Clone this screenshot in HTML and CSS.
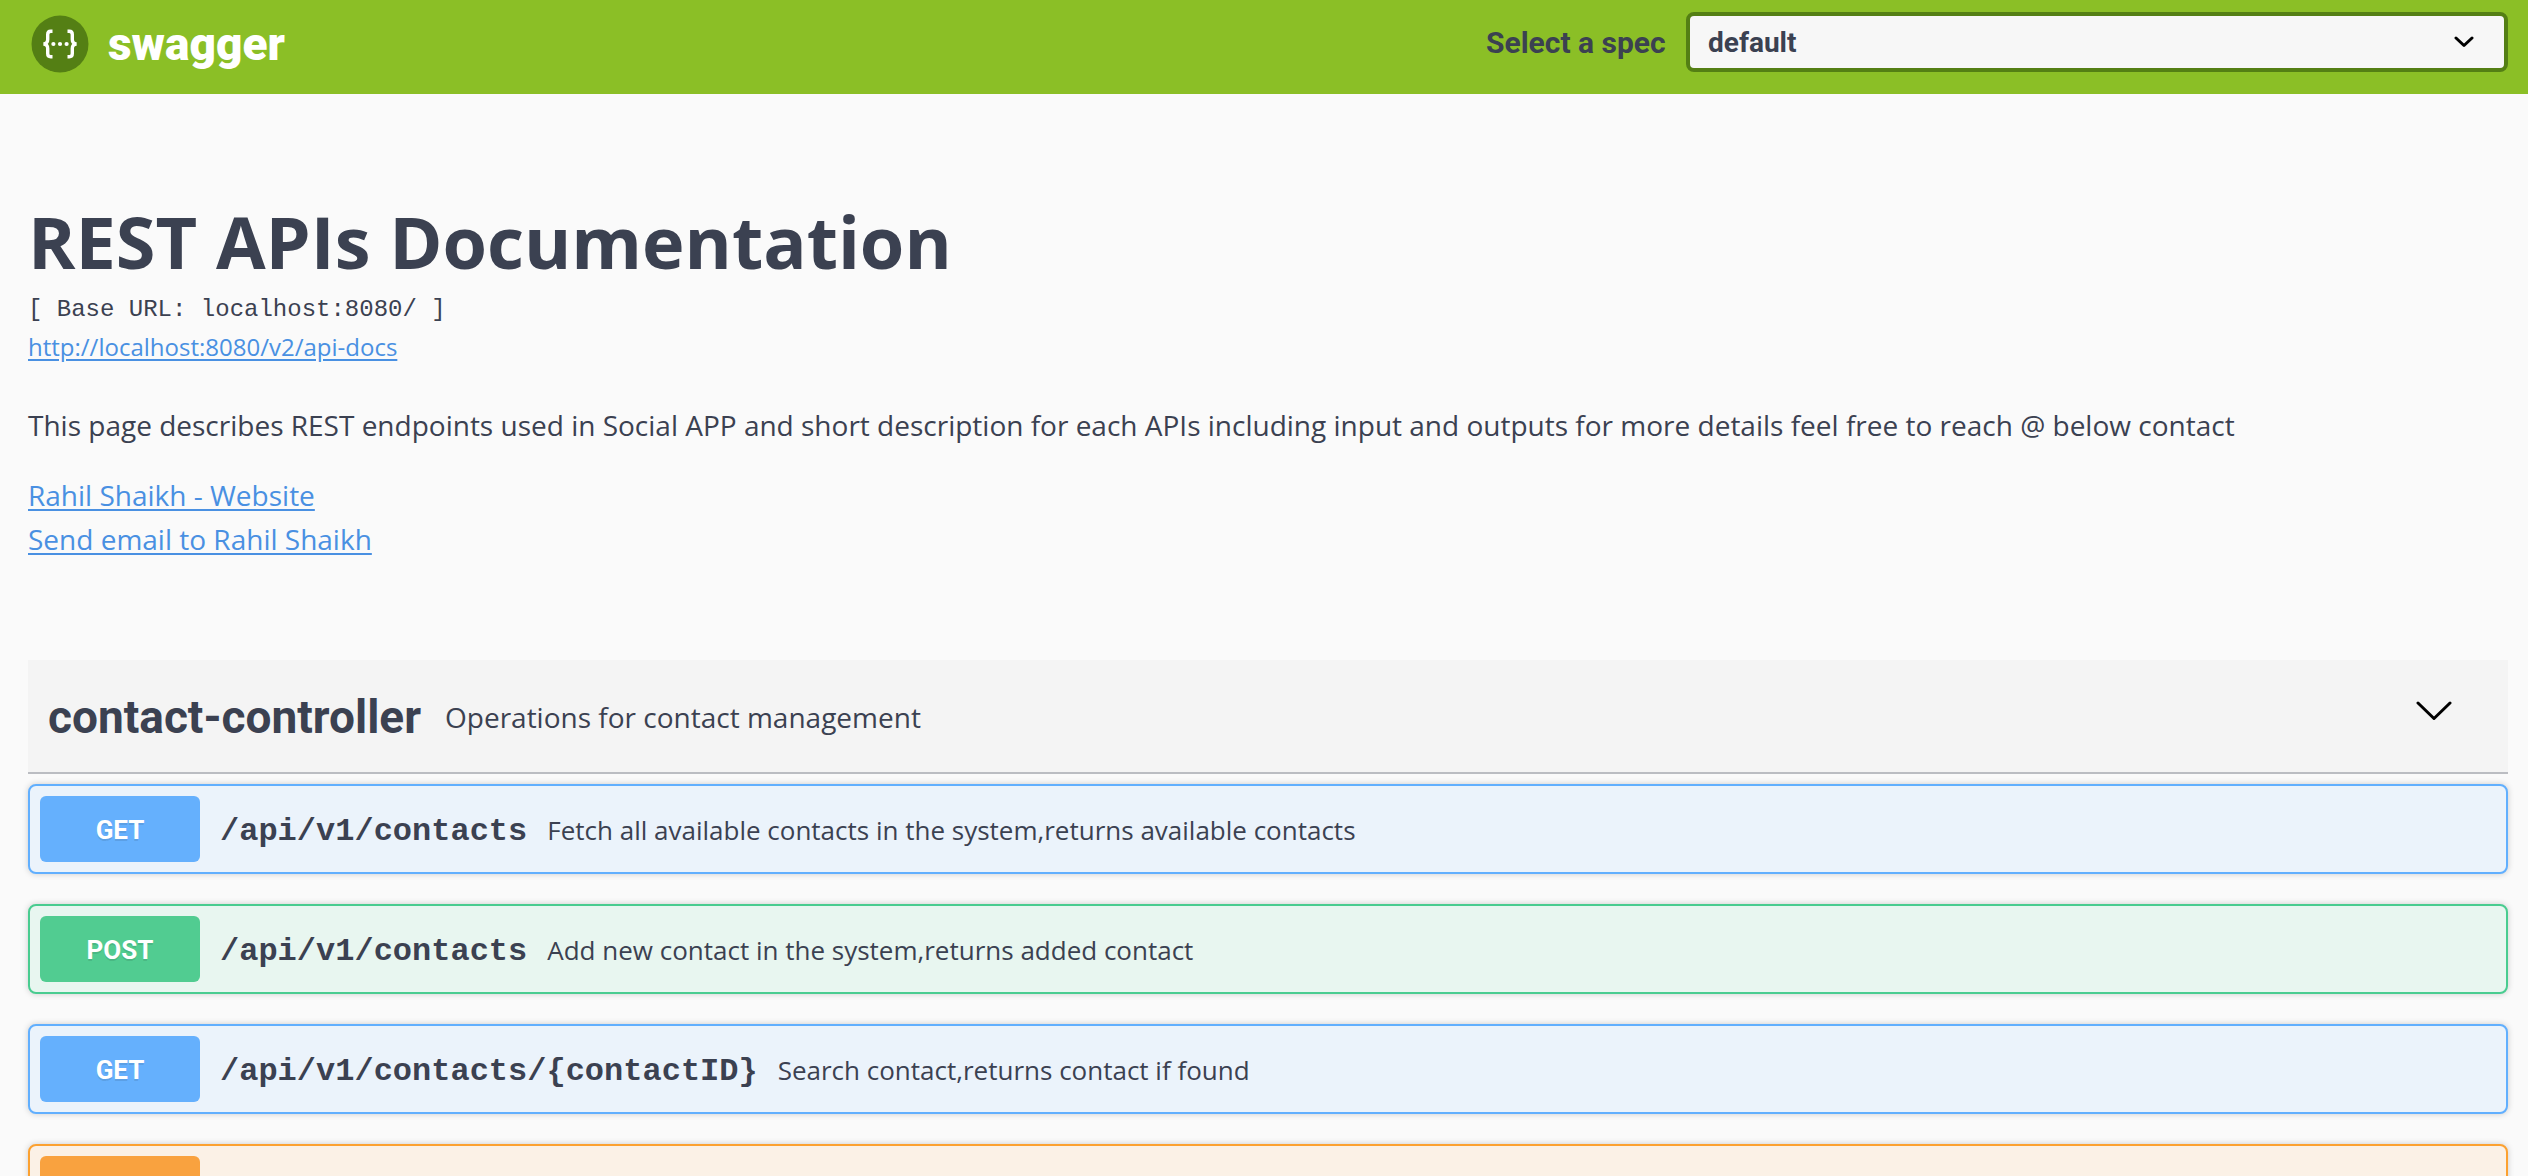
FILE: index.html
```html
<!DOCTYPE html>
<html lang="en">
<head>
<meta charset="utf-8">
<meta name="viewport" content="width=device-width, initial-scale=1">
<title>Swagger UI</title>
<link rel="stylesheet" href="styles.css">
</head>
<body>
<header class="topbar">
  <a class="brand" href="#">
    <svg class="brand-mark" viewBox="0 0 60 60" aria-hidden="true">
      <circle cx="30" cy="30" r="28.5" fill="#547f14"/>
      <g fill="none" stroke="#fff" stroke-width="3.4">
        <path d="M22.5 17.2h-1.8q-3 0-3 3.2v5.2q0 4-4.2 4.4q4.2.4 4.2 4.4v5.2q0 3.2 3 3.2h1.8"/>
        <path d="M37.5 17.2h1.8q3 0 3 3.2v5.2q0 4 4.2 4.4q-4.2.4-4.2 4.4v5.2q0 3.2-3 3.2h-1.8"/>
      </g>
      <g fill="#fff"><circle cx="23.4" cy="30" r="2.1"/><circle cx="30" cy="30" r="2.1"/><circle cx="36.6" cy="30" r="2.1"/></g>
    </svg>
    <span class="brand-name">swagger</span>
  </a>
  <form class="spec-form">
    <label class="spec-label" for="spec">Select a spec</label>
    <span class="spec-field">
      <select class="spec-select" id="spec"><option>default</option></select>
      <svg class="spec-arrow" viewBox="0 0 20 12" aria-hidden="true"><path d="M2 2l8 7.5 8-7.5"/></svg>
    </span>
  </form>
</header>
<main class="page">
  <section class="info">
    <h1 class="info-title">REST APIs Documentation</h1>
    <p class="base-url">[ Base URL: localhost:8080/ ]</p>
    <a class="docs-link" href="#">http://localhost:8080/v2/api-docs</a>
    <p class="description">This page describes REST endpoints used in Social APP and short description for each APIs including input and outputs for more details feel free to reach @ below contact</p>
    <div class="contact">
      <a href="#">Rahil Shaikh - Website</a>
      <a href="#">Send email to Rahil Shaikh</a>
    </div>
  </section>
  <section class="tag-section">
    <button class="tag-header" type="button">
      <span class="tag-name">contact-controller</span>
      <span class="tag-text">Operations for contact management</span>
      <svg class="tag-arrow" viewBox="0 0 36 20" aria-hidden="true"><path d="M2 2l16 15.5 16-15.5"/></svg>
    </button>
    <div class="operations">
      <button class="operation get" type="button">
        <span class="method">GET</span><span class="path">/api/v1/contacts</span>
        <span class="summary">Fetch all available contacts in the system,returns available contacts</span>
      </button>
      <button class="operation post" type="button">
        <span class="method">POST</span><span class="path">/api/v1/contacts</span>
        <span class="summary">Add new contact in the system,returns added contact</span>
      </button>
      <button class="operation get" type="button">
        <span class="method">GET</span><span class="path">/api/v1/contacts/{contactID}</span>
        <span class="summary">Search contact,returns contact if found</span>
      </button>
      <button class="operation put" type="button" aria-label="Operation">
        <span class="method"></span>
      </button>
    </div>
  </section>
</main>
</body>
</html>
```
FILE: styles.css
```css
* { box-sizing: border-box; }

html { height: 100%; overflow: hidden; }

body {
  height: 100%;
  margin: 0;
  overflow: hidden;
  background: #fafafa;
  color: #3b4151;
  font-family: "Open Sans", sans-serif;
}

button { font: inherit; color: inherit; text-align: left; cursor: pointer; }
a { color: #4990e2; text-underline-offset: 3px; }

.topbar {
  display: flex;
  align-items: flex-start;
  justify-content: space-between;
  padding: 12px 20px 22px 30px;
  background: #8bbf26;
}

.brand {
  display: flex;
  align-items: center;
  gap: 18px;
  height: 60px;
  color: #fff;
  text-decoration: none;
}
.brand-mark { width: 60px; height: 60px; margin-top: 4px; }
.brand-name { padding-top: 4px; font: 900 46px/60px Roboto, sans-serif; }

.spec-form {
  display: flex;
  align-items: center;
  gap: 20px;
  width: 50%;
  max-width: 1022px;
}
.spec-label {
  flex: 0 0 180px;
  padding-top: 2px;
  font: 700 30px/58px Roboto, sans-serif;
  white-space: nowrap;
}
.spec-field { position: relative; flex: 1; display: flex; }
.spec-select {
  width: 100%;
  height: 60px;
  padding: 0 80px 0 18px;
  border: 4px solid #547f14;
  border-radius: 8px;
  background: #f7f7f7;
  color: #3b4151;
  font: 700 28px Roboto, sans-serif;
  appearance: none;
}
.spec-arrow {
  position: absolute;
  right: 34px;
  top: 24px;
  width: 20px;
  height: 12px;
  pointer-events: none;
}
.spec-arrow path, .tag-arrow path {
  fill: none;
  stroke: #000;
  stroke-width: 3;
  stroke-linecap: round;
  stroke-linejoin: round;
}

.page { padding: 98px 20px 0 28px; }

.info { display: flex; flex-direction: column; align-items: flex-start; }
.info p { margin: 0; }
.info-title { margin: 0; font-size: 72px; line-height: 98px; font-weight: 700; }
.info .base-url {
  padding-top: 4px;
  font: 300 24px/32px "Liberation Mono", monospace;
}
.docs-link { margin-top: 4px; font-size: 24px; line-height: 34px; }
.info .description { margin-top: 39px; font-size: 28px; line-height: 44px; }
.contact {
  display: flex;
  flex-direction: column;
  align-items: flex-start;
  margin-top: 26px;
  font-size: 28px;
  line-height: 44px;
}

.tag-section { margin-top: 99px; }
.tag-header {
  display: flex;
  align-items: center;
  width: 100%;
  padding: 24px 56px 24px 20px;
  border: 0;
  border-bottom: 2px solid #bbbdc2;
  background: #f4f4f4;
}
.tag-name { padding-top: 2px; font: 700 46px/62px Roboto, sans-serif; }
.tag-text { flex: 1; padding: 2px 0 0 24px; font-size: 28px; line-height: 40px; }
.tag-arrow { width: 36px; height: 20px; margin-bottom: 10px; }

.operations { display: flex; flex-direction: column; gap: 30px; padding-top: 10px; }
.operation {
  display: flex;
  align-items: center;
  width: 100%;
  min-height: 90px;
  padding: 10px;
  border: 2px solid;
  border-radius: 8px;
  box-shadow: 0 0 6px rgba(0, 0, 0, 0.19);
}
.method {
  width: 160px;
  height: 66px;
  border-radius: 6px;
  color: #fff;
  font: 700 26px/68px Roboto, sans-serif;
  text-align: center;
  text-shadow: 0 2px 0 rgba(0, 0, 0, 0.1);
}
.path { padding: 6px 20px 0; font: 700 32px/44px "Liberation Mono", monospace; }
.summary { padding-top: 2px; font-size: 26px; line-height: 44px; }

.get { border-color: #61affe; background: #ebf3fb; }
.get .method { background: #65b0fd; }
.post { border-color: #49cc90; background: #e8f6f0; }
.post .method { background: #51cc91; }
.put { border-color: #fca130; background: #fbf1e6; }
.put .method { background: #f9a23f; }
```
